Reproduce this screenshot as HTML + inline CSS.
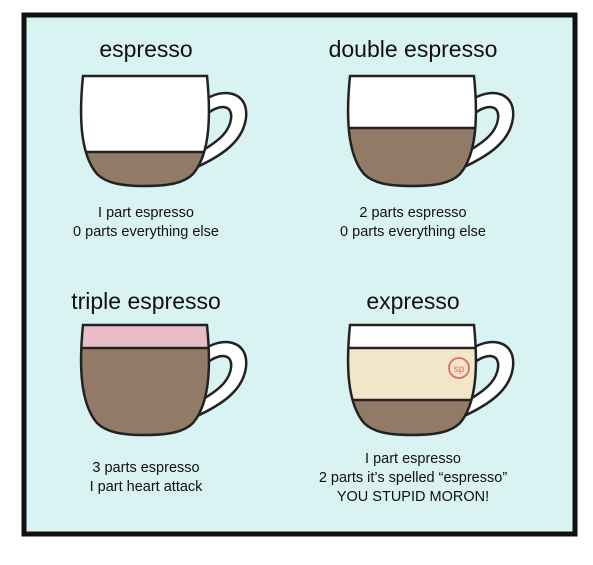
<!DOCTYPE html>
<html><head><style>
html,body{margin:0;padding:0;background:#fff;width:593px;height:565px;overflow:hidden}
svg{display:block}
text{font-family:"Liberation Sans","DejaVu Sans",sans-serif;fill:#111;text-anchor:middle}
.t{font-size:23px}
.c{font-size:14.5px}
</style></head><body>
<svg width="593" height="565" viewBox="0 0 593 565">
<defs>
<path id="body" d="M0,0 L124,0 C128,40 127,78 110,98 C101,107 86,110 62,110 C38,110 23,107 14,98 C-3,78 -4,40 0,0 Z"/>
<clipPath id="cl"><use href="#body"/></clipPath>
<g id="handle">
<path d="M122,24 C138,12 166,14 163,42 C160,66 138,80 112,92 L117,76 C134,66 146,57 148,43 C150,28 136,28 124,38 Z" fill="#fff" stroke="#222" stroke-width="2.5" stroke-linejoin="round"/>
</g>
</defs>
<rect x="0" y="0" width="593" height="565" fill="#fff"/>
<rect x="24" y="15" width="551" height="519" fill="#d9f3f3" stroke="#111" stroke-width="5"/>

<text class="t" x="146" y="57">espresso</text>
<text class="t" x="413" y="57">double espresso</text>
<text class="t" x="146" y="309">triple espresso</text>
<text class="t" x="413" y="309">expresso</text>

<g transform="translate(83,76)">
<use href="#handle"/>
<g clip-path="url(#cl)">
<rect x="-10" y="-5" width="150" height="130" fill="#fff"/>
<rect x="-10" y="76" width="150" height="50" fill="#917b67"/>
<line x1="-10" y1="76" x2="140" y2="76" stroke="#222" stroke-width="2.5"/>
</g>
<use href="#body" fill="none" stroke="#222" stroke-width="2.5"/>
</g>
<g transform="translate(350,76)">
<use href="#handle"/>
<g clip-path="url(#cl)">
<rect x="-10" y="-5" width="150" height="130" fill="#fff"/>
<rect x="-10" y="52" width="150" height="70" fill="#917b67"/>
<line x1="-10" y1="52" x2="140" y2="52" stroke="#222" stroke-width="2.5"/>
</g>
<use href="#body" fill="none" stroke="#222" stroke-width="2.5"/>
</g>
<g transform="translate(83,325)">
<use href="#handle"/>
<g clip-path="url(#cl)">
<rect x="-10" y="-5" width="150" height="130" fill="#917b67"/>
<rect x="-10" y="-5" width="150" height="28" fill="#e9bcc6"/>
<line x1="-10" y1="23" x2="140" y2="23" stroke="#222" stroke-width="2.5"/>
</g>
<use href="#body" fill="none" stroke="#222" stroke-width="2.5"/>
</g>
<g transform="translate(350,325)">
<use href="#handle"/>
<g clip-path="url(#cl)">
<rect x="-10" y="-5" width="150" height="130" fill="#917b67"/>
<rect x="-10" y="-5" width="150" height="80" fill="#f3e6c8"/>
<rect x="-10" y="-5" width="150" height="28" fill="#fff"/>
<line x1="-10" y1="23" x2="140" y2="23" stroke="#222" stroke-width="2.5"/>
<line x1="-10" y1="75" x2="140" y2="75" stroke="#222" stroke-width="2.5"/>
</g>
<use href="#body" fill="none" stroke="#222" stroke-width="2.5"/>
<circle cx="109" cy="43" r="10" fill="none" stroke="#e06a6a" stroke-width="1.8"/>
<text x="109" y="47" style="font-size:10px;fill:#e06a6a">sp</text>
</g>

<text class="c" x="146" y="217">I part espresso</text>
<text class="c" x="146" y="236">0 parts everything else</text>
<text class="c" x="413" y="217">2 parts espresso</text>
<text class="c" x="413" y="236">0 parts everything else</text>
<text class="c" x="146" y="472">3 parts espresso</text>
<text class="c" x="146" y="491">I part heart attack</text>
<text class="c" x="413" y="463">I part espresso</text>
<text class="c" x="413" y="482">2 parts it’s spelled “espresso”</text>
<text class="c" x="413" y="501">YOU STUPID MORON!</text>
</svg>
</body></html>
